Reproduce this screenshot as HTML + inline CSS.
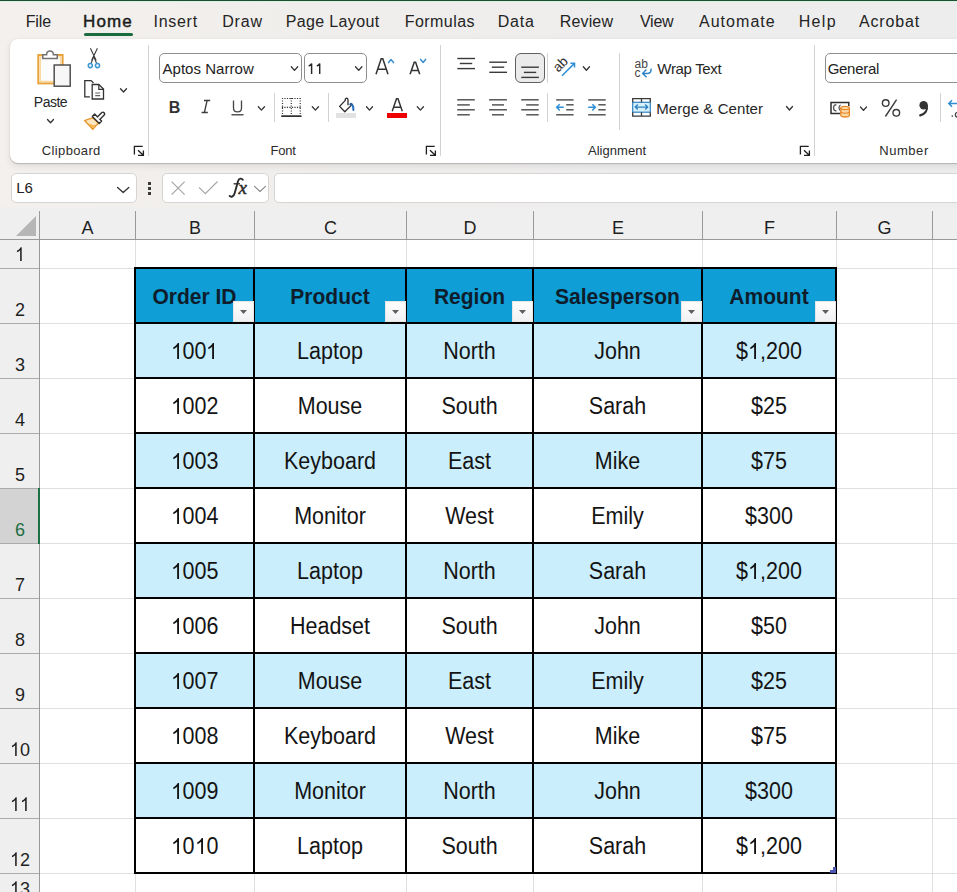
<!DOCTYPE html>
<html><head><meta charset="utf-8">
<style>
*{margin:0;padding:0;box-sizing:border-box}
html,body{width:957px;height:892px;overflow:hidden;background:linear-gradient(90deg,#f3f0ed 0%,#f0eeec 35%,#eeeded 65%,#ededed 100%);font-family:"Liberation Sans",sans-serif}
body{position:relative}
.a{position:absolute}
.t{position:absolute;white-space:nowrap;line-height:1}
#ov{position:absolute;left:0;top:0;overflow:visible}
</style></head><body>
<div class="a" style="left:0px;top:0px;width:957px;height:1px;background:#1b4f30;"></div>
<div class="a" style="left:0px;top:1px;width:957px;height:1px;background:#d6f2e0;"></div>
<div class="t" style="left:25.69px;top:14.00px;font-size:16px;color:#242424;font-weight:normal;letter-spacing:-0.119px;">File</div>
<div class="t" style="left:153.52px;top:14.00px;font-size:16px;color:#242424;font-weight:normal;letter-spacing:0.716px;">Insert</div>
<div class="t" style="left:222.19px;top:14.00px;font-size:16px;color:#242424;font-weight:normal;letter-spacing:0.812px;">Draw</div>
<div class="t" style="left:285.69px;top:14.00px;font-size:16px;color:#242424;font-weight:normal;letter-spacing:0.358px;">Page Layout</div>
<div class="t" style="left:404.69px;top:14.00px;font-size:16px;color:#242424;font-weight:normal;letter-spacing:0.459px;">Formulas</div>
<div class="t" style="left:497.69px;top:14.00px;font-size:16px;color:#242424;font-weight:normal;letter-spacing:0.839px;">Data</div>
<div class="t" style="left:559.69px;top:14.00px;font-size:16px;color:#242424;font-weight:normal;letter-spacing:0.163px;">Review</div>
<div class="t" style="left:639.93px;top:14.00px;font-size:16px;color:#242424;font-weight:normal;letter-spacing:-0.216px;">View</div>
<div class="t" style="left:698.97px;top:14.00px;font-size:16px;color:#242424;font-weight:normal;letter-spacing:1.037px;">Automate</div>
<div class="t" style="left:798.69px;top:14.00px;font-size:16px;color:#242424;font-weight:normal;letter-spacing:1.359px;">Help</div>
<div class="t" style="left:858.97px;top:14.00px;font-size:16px;color:#242424;font-weight:normal;letter-spacing:0.835px;">Acrobat</div>
<div class="t" style="left:83.11px;top:13.00px;font-size:17px;color:#1b1b1b;font-weight:normal;letter-spacing:1.101px;-webkit-text-stroke:0.45px #1b1b1b;">Home</div>
<div class="a" style="left:84px;top:33px;width:49px;height:3px;background:#1c6b3f;border-radius:1.5px"></div>
<div class="a" style="left:10px;top:39px;width:980px;height:124px;background:#fff;border-radius:8px;box-shadow:0 1px 1px rgba(0,0,0,.18),0 3px 7px rgba(0,0,0,.09),0 0 1px rgba(0,0,0,.12)"></div>
<div class="t" style="left:41.84px;top:144.00px;font-size:13px;color:#2b2b2b;font-weight:normal;letter-spacing:0.357px;">Clipboard</div>
<div class="t" style="left:270.43px;top:144.00px;font-size:13px;color:#2b2b2b;font-weight:normal;letter-spacing:-0.184px;">Font</div>
<div class="t" style="left:587.97px;top:144.00px;font-size:13px;color:#2b2b2b;font-weight:normal;letter-spacing:0.039px;">Alignment</div>
<div class="t" style="left:879.33px;top:144.00px;font-size:13px;color:#2b2b2b;font-weight:normal;letter-spacing:0.529px;">Number</div>
<div class="a" style="left:148px;top:45px;width:1px;height:111px;background:#d2d2d2;"></div>
<div class="a" style="left:440px;top:45px;width:1px;height:111px;background:#d2d2d2;"></div>
<div class="a" style="left:814px;top:45px;width:1px;height:111px;background:#d2d2d2;"></div>
<div class="t" style="left:33.85px;top:95.00px;font-size:14px;color:#262626;font-weight:normal;letter-spacing:-0.507px;">Paste</div>
<div class="a" style="left:159px;top:53px;width:143px;height:30px;border:1px solid #8f8f8f;border-radius:5px;background:#fff"></div>
<div class="t" style="left:162.47px;top:61.00px;font-size:15px;color:#222;font-weight:normal;letter-spacing:0.039px;">Aptos Narrow</div>
<div class="a" style="left:304px;top:53px;width:63px;height:30px;border:1px solid #8f8f8f;border-radius:5px;background:#fff"></div>
<div class="t" style="left:168.83px;top:100.00px;font-size:16px;color:#333;font-weight:bold;letter-spacing:0.000px;">B</div>
<div class="a" style="left:274px;top:93px;width:1px;height:29px;background:#d2d2d2;"></div>
<div class="a" style="left:328px;top:93px;width:1px;height:29px;background:#d2d2d2;"></div>
<div class="a" style="left:336px;top:113px;width:20px;height:5px;background:#e2e2e2;"></div>
<div class="a" style="left:387px;top:113px;width:20px;height:5px;background:#ee0000;"></div>
<div class="a" style="left:515px;top:53px;width:30px;height:30px;border:1px solid #606060;border-radius:6px;background:#ebebeb"></div>
<div class="a" style="left:547px;top:53px;width:1px;height:30px;background:#d2d2d2;"></div>
<div class="a" style="left:547px;top:93px;width:1px;height:29px;background:#d2d2d2;"></div>
<div class="a" style="left:619px;top:53px;width:1px;height:77px;background:#d2d2d2;"></div>
<div class="t" style="left:657.33px;top:61.00px;font-size:15px;color:#262626;font-weight:normal;letter-spacing:-0.325px;">Wrap Text</div>
<div class="t" style="left:656.17px;top:101.00px;font-size:15px;color:#262626;font-weight:normal;letter-spacing:0.077px;">Merge &amp; Center</div>
<div class="a" style="left:825px;top:53px;width:200px;height:30px;border:1px solid #8f8f8f;border-radius:5px;background:#fff"></div>
<div class="t" style="left:827.65px;top:61.00px;font-size:15px;color:#222;font-weight:normal;letter-spacing:-0.268px;">General</div>
<div class="a" style="left:940px;top:93px;width:1px;height:29px;background:#d2d2d2;"></div>
<div class="a" style="left:11px;top:173px;width:126px;height:30px;border:1px solid #d4d4d4;border-radius:5px;background:#fff"></div>
<div class="t" style="left:16.27px;top:180.00px;font-size:15px;color:#222;font-weight:normal;letter-spacing:0.000px;">L6</div>
<div class="a" style="left:148px;top:182.2px;width:3px;height:2.6px;background:#3a3a3a;"></div>
<div class="a" style="left:148px;top:187.3px;width:3px;height:2.6px;background:#3a3a3a;"></div>
<div class="a" style="left:148px;top:192.3px;width:3px;height:2.6px;background:#3a3a3a;"></div>
<div class="a" style="left:162px;top:173px;width:107px;height:30px;border:1px solid #d4d4d4;border-radius:5px;background:#fff"></div>
<div class="t" style="left:238.43px;top:178.00px;font-size:19px;color:#2a2a2a;font-weight:normal;letter-spacing:0.000px;font-family:'Liberation Serif',serif;font-style:italic;-webkit-text-stroke:0.5px #2a2a2a;">x</div>
<div class="a" style="left:274px;top:173px;width:720px;height:30px;border:1px solid #d4d4d4;border-radius:5px;background:#fff"></div>
<div class="a" style="left:0px;top:207px;width:957px;height:685px;background:#fff;"></div>
<div class="a" style="left:0px;top:207px;width:957px;height:32px;background:#efefef;"></div>
<div class="a" style="left:0px;top:239px;width:39px;height:653px;background:#efefef;"></div>
<div class="a" style="left:135px;top:240px;width:1px;height:652px;background:#e0e0e0;"></div>
<div class="a" style="left:254px;top:240px;width:1px;height:652px;background:#e0e0e0;"></div>
<div class="a" style="left:406px;top:240px;width:1px;height:652px;background:#e0e0e0;"></div>
<div class="a" style="left:533px;top:240px;width:1px;height:652px;background:#e0e0e0;"></div>
<div class="a" style="left:702px;top:240px;width:1px;height:652px;background:#e0e0e0;"></div>
<div class="a" style="left:836px;top:240px;width:1px;height:652px;background:#e0e0e0;"></div>
<div class="a" style="left:932px;top:240px;width:1px;height:652px;background:#e0e0e0;"></div>
<div class="a" style="left:40px;top:268px;width:917px;height:1px;background:#e0e0e0;"></div>
<div class="a" style="left:40px;top:323px;width:917px;height:1px;background:#e0e0e0;"></div>
<div class="a" style="left:40px;top:378px;width:917px;height:1px;background:#e0e0e0;"></div>
<div class="a" style="left:40px;top:433px;width:917px;height:1px;background:#e0e0e0;"></div>
<div class="a" style="left:40px;top:488px;width:917px;height:1px;background:#e0e0e0;"></div>
<div class="a" style="left:40px;top:543px;width:917px;height:1px;background:#e0e0e0;"></div>
<div class="a" style="left:40px;top:598px;width:917px;height:1px;background:#e0e0e0;"></div>
<div class="a" style="left:40px;top:653px;width:917px;height:1px;background:#e0e0e0;"></div>
<div class="a" style="left:40px;top:708px;width:917px;height:1px;background:#e0e0e0;"></div>
<div class="a" style="left:40px;top:763px;width:917px;height:1px;background:#e0e0e0;"></div>
<div class="a" style="left:40px;top:818px;width:917px;height:1px;background:#e0e0e0;"></div>
<div class="a" style="left:40px;top:873px;width:917px;height:1px;background:#e0e0e0;"></div>
<div class="a" style="left:135px;top:211px;width:1px;height:28px;background:#9a9a9a;"></div>
<div class="a" style="left:254px;top:211px;width:1px;height:28px;background:#9a9a9a;"></div>
<div class="a" style="left:406px;top:211px;width:1px;height:28px;background:#9a9a9a;"></div>
<div class="a" style="left:533px;top:211px;width:1px;height:28px;background:#9a9a9a;"></div>
<div class="a" style="left:702px;top:211px;width:1px;height:28px;background:#9a9a9a;"></div>
<div class="a" style="left:836px;top:211px;width:1px;height:28px;background:#9a9a9a;"></div>
<div class="a" style="left:932px;top:211px;width:1px;height:28px;background:#9a9a9a;"></div>
<div class="a" style="left:0px;top:239px;width:957px;height:1px;background:#9a9a9a;"></div>
<div class="a" style="left:39px;top:211px;width:1px;height:681px;background:#9a9a9a;"></div>
<div class="a" style="left:0px;top:268px;width:39px;height:1px;background:#ababab;"></div>
<div class="a" style="left:0px;top:323px;width:39px;height:1px;background:#ababab;"></div>
<div class="a" style="left:0px;top:378px;width:39px;height:1px;background:#ababab;"></div>
<div class="a" style="left:0px;top:433px;width:39px;height:1px;background:#ababab;"></div>
<div class="a" style="left:0px;top:488px;width:39px;height:1px;background:#ababab;"></div>
<div class="a" style="left:0px;top:543px;width:39px;height:1px;background:#ababab;"></div>
<div class="a" style="left:0px;top:598px;width:39px;height:1px;background:#ababab;"></div>
<div class="a" style="left:0px;top:653px;width:39px;height:1px;background:#ababab;"></div>
<div class="a" style="left:0px;top:708px;width:39px;height:1px;background:#ababab;"></div>
<div class="a" style="left:0px;top:763px;width:39px;height:1px;background:#ababab;"></div>
<div class="a" style="left:0px;top:818px;width:39px;height:1px;background:#ababab;"></div>
<div class="a" style="left:0px;top:873px;width:39px;height:1px;background:#ababab;"></div>
<div class="a" style="left:0px;top:489px;width:38px;height:54px;background:#d3d3d3;"></div>
<div class="a" style="left:38px;top:488px;width:2px;height:56px;background:#1e7145;"></div>
<div class="t" style="left:-62.5px;width:300px;text-align:center;top:219.00px;font-size:18px;color:#1f1f1f;font-weight:normal;transform:scaleY(1.07);transform-origin:50% 15px;">A</div>
<div class="t" style="left:45.0px;width:300px;text-align:center;top:219.00px;font-size:18px;color:#1f1f1f;font-weight:normal;transform:scaleY(1.07);transform-origin:50% 15px;">B</div>
<div class="t" style="left:180.5px;width:300px;text-align:center;top:219.00px;font-size:18px;color:#1f1f1f;font-weight:normal;transform:scaleY(1.07);transform-origin:50% 15px;">C</div>
<div class="t" style="left:320.0px;width:300px;text-align:center;top:219.00px;font-size:18px;color:#1f1f1f;font-weight:normal;transform:scaleY(1.07);transform-origin:50% 15px;">D</div>
<div class="t" style="left:468.0px;width:300px;text-align:center;top:219.00px;font-size:18px;color:#1f1f1f;font-weight:normal;transform:scaleY(1.07);transform-origin:50% 15px;">E</div>
<div class="t" style="left:619.5px;width:300px;text-align:center;top:219.00px;font-size:18px;color:#1f1f1f;font-weight:normal;transform:scaleY(1.07);transform-origin:50% 15px;">F</div>
<div class="t" style="left:734.5px;width:300px;text-align:center;top:219.00px;font-size:18px;color:#1f1f1f;font-weight:normal;transform:scaleY(1.07);transform-origin:50% 15px;">G</div>
<div class="t" style="left:-130px;width:300px;text-align:center;top:246.00px;font-size:18px;color:#1f1f1f;font-weight:normal;transform:scaleY(1.07);transform-origin:50% 15px;"><svg width="10.011" height="12.960" viewBox="0 -1475 1139 1475" style="vertical-align:baseline;display:inline-block"><path transform="scale(1,-1)" d="M586 0 H763 V1466 H648 C600 1370 520 1280 410 1200 C340 1150 270 1115 223 1094 V920 C310 955 420 1010 500 1070 C540 1100 570 1125 586 1140 Z" fill="#1f1f1f"/></svg></div>
<div class="t" style="left:-130px;width:300px;text-align:center;top:301.00px;font-size:18px;color:#1f1f1f;font-weight:normal;transform:scaleY(1.07);transform-origin:50% 15px;">2</div>
<div class="t" style="left:-130px;width:300px;text-align:center;top:356.00px;font-size:18px;color:#1f1f1f;font-weight:normal;transform:scaleY(1.07);transform-origin:50% 15px;">3</div>
<div class="t" style="left:-130px;width:300px;text-align:center;top:411.00px;font-size:18px;color:#1f1f1f;font-weight:normal;transform:scaleY(1.07);transform-origin:50% 15px;">4</div>
<div class="t" style="left:-130px;width:300px;text-align:center;top:466.00px;font-size:18px;color:#1f1f1f;font-weight:normal;transform:scaleY(1.07);transform-origin:50% 15px;">5</div>
<div class="t" style="left:-130px;width:300px;text-align:center;top:521.00px;font-size:18px;color:#1e6e43;font-weight:normal;transform:scaleY(1.07);transform-origin:50% 15px;">6</div>
<div class="t" style="left:-130px;width:300px;text-align:center;top:576.00px;font-size:18px;color:#1f1f1f;font-weight:normal;transform:scaleY(1.07);transform-origin:50% 15px;">7</div>
<div class="t" style="left:-130px;width:300px;text-align:center;top:631.00px;font-size:18px;color:#1f1f1f;font-weight:normal;transform:scaleY(1.07);transform-origin:50% 15px;">8</div>
<div class="t" style="left:-130px;width:300px;text-align:center;top:686.00px;font-size:18px;color:#1f1f1f;font-weight:normal;transform:scaleY(1.07);transform-origin:50% 15px;">9</div>
<div class="t" style="left:-130px;width:300px;text-align:center;top:741.00px;font-size:18px;color:#1f1f1f;font-weight:normal;transform:scaleY(1.07);transform-origin:50% 15px;"><svg width="10.011" height="12.960" viewBox="0 -1475 1139 1475" style="vertical-align:baseline;display:inline-block"><path transform="scale(1,-1)" d="M586 0 H763 V1466 H648 C600 1370 520 1280 410 1200 C340 1150 270 1115 223 1094 V920 C310 955 420 1010 500 1070 C540 1100 570 1125 586 1140 Z" fill="#1f1f1f"/></svg>0</div>
<div class="t" style="left:-130px;width:300px;text-align:center;top:796.00px;font-size:18px;color:#1f1f1f;font-weight:normal;transform:scaleY(1.07);transform-origin:50% 15px;"><svg width="10.011" height="12.960" viewBox="0 -1475 1139 1475" style="vertical-align:baseline;display:inline-block"><path transform="scale(1,-1)" d="M586 0 H763 V1466 H648 C600 1370 520 1280 410 1200 C340 1150 270 1115 223 1094 V920 C310 955 420 1010 500 1070 C540 1100 570 1125 586 1140 Z" fill="#1f1f1f"/></svg><svg width="10.011" height="12.960" viewBox="0 -1475 1139 1475" style="vertical-align:baseline;display:inline-block"><path transform="scale(1,-1)" d="M586 0 H763 V1466 H648 C600 1370 520 1280 410 1200 C340 1150 270 1115 223 1094 V920 C310 955 420 1010 500 1070 C540 1100 570 1125 586 1140 Z" fill="#1f1f1f"/></svg></div>
<div class="t" style="left:-130px;width:300px;text-align:center;top:851.00px;font-size:18px;color:#1f1f1f;font-weight:normal;transform:scaleY(1.07);transform-origin:50% 15px;"><svg width="10.011" height="12.960" viewBox="0 -1475 1139 1475" style="vertical-align:baseline;display:inline-block"><path transform="scale(1,-1)" d="M586 0 H763 V1466 H648 C600 1370 520 1280 410 1200 C340 1150 270 1115 223 1094 V920 C310 955 420 1010 500 1070 C540 1100 570 1125 586 1140 Z" fill="#1f1f1f"/></svg>2</div>
<div class="t" style="left:-130px;width:300px;text-align:center;top:880.00px;font-size:18px;color:#1f1f1f;font-weight:normal;transform:scaleY(1.07);transform-origin:50% 15px;"><svg width="10.011" height="12.960" viewBox="0 -1475 1139 1475" style="vertical-align:baseline;display:inline-block"><path transform="scale(1,-1)" d="M586 0 H763 V1466 H648 C600 1370 520 1280 410 1200 C340 1150 270 1115 223 1094 V920 C310 955 420 1010 500 1070 C540 1100 570 1125 586 1140 Z" fill="#1f1f1f"/></svg>3</div>
<div class="a" style="left:136px;top:269px;width:700px;height:54px;background:#0f9ed5;"></div>
<div class="a" style="left:136px;top:324px;width:700px;height:54px;background:#caeefb;"></div>
<div class="a" style="left:136px;top:434px;width:700px;height:54px;background:#caeefb;"></div>
<div class="a" style="left:136px;top:544px;width:700px;height:54px;background:#caeefb;"></div>
<div class="a" style="left:136px;top:654px;width:700px;height:54px;background:#caeefb;"></div>
<div class="a" style="left:136px;top:764px;width:700px;height:54px;background:#caeefb;"></div>
<div class="a" style="left:134px;top:267px;width:2px;height:607px;background:#000;"></div>
<div class="a" style="left:253px;top:267px;width:2px;height:607px;background:#000;"></div>
<div class="a" style="left:405px;top:267px;width:2px;height:607px;background:#000;"></div>
<div class="a" style="left:532px;top:267px;width:2px;height:607px;background:#000;"></div>
<div class="a" style="left:701px;top:267px;width:2px;height:607px;background:#000;"></div>
<div class="a" style="left:835px;top:267px;width:2px;height:607px;background:#000;"></div>
<div class="a" style="left:134px;top:267px;width:703px;height:2px;background:#000;"></div>
<div class="a" style="left:134px;top:322px;width:703px;height:2px;background:#000;"></div>
<div class="a" style="left:134px;top:377px;width:703px;height:2px;background:#000;"></div>
<div class="a" style="left:134px;top:432px;width:703px;height:2px;background:#000;"></div>
<div class="a" style="left:134px;top:487px;width:703px;height:2px;background:#000;"></div>
<div class="a" style="left:134px;top:542px;width:703px;height:2px;background:#000;"></div>
<div class="a" style="left:134px;top:597px;width:703px;height:2px;background:#000;"></div>
<div class="a" style="left:134px;top:652px;width:703px;height:2px;background:#000;"></div>
<div class="a" style="left:134px;top:707px;width:703px;height:2px;background:#000;"></div>
<div class="a" style="left:134px;top:762px;width:703px;height:2px;background:#000;"></div>
<div class="a" style="left:134px;top:817px;width:703px;height:2px;background:#000;"></div>
<div class="a" style="left:134px;top:872px;width:703px;height:2px;background:#000;"></div>
<div class="t" style="left:44.5px;width:300px;text-align:center;top:286.00px;font-size:21px;color:#0e1c2b;font-weight:bold;transform:scaleY(1.09);transform-origin:50% 18px;">Order ID</div>
<div class="t" style="left:180.0px;width:300px;text-align:center;top:286.00px;font-size:21px;color:#0e1c2b;font-weight:bold;transform:scaleY(1.09);transform-origin:50% 18px;">Product</div>
<div class="t" style="left:319.5px;width:300px;text-align:center;top:286.00px;font-size:21px;color:#0e1c2b;font-weight:bold;transform:scaleY(1.09);transform-origin:50% 18px;">Region</div>
<div class="t" style="left:467.5px;width:300px;text-align:center;top:286.00px;font-size:21px;color:#0e1c2b;font-weight:bold;transform:scaleY(1.09);transform-origin:50% 18px;">Salesperson</div>
<div class="t" style="left:619.0px;width:300px;text-align:center;top:286.00px;font-size:21px;color:#0e1c2b;font-weight:bold;transform:scaleY(1.09);transform-origin:50% 18px;">Amount</div>
<div class="t" style="left:44.5px;width:300px;text-align:center;top:342.00px;font-size:21.5px;color:#141414;font-weight:normal;transform:scaleY(1.07);transform-origin:50% 17px;"><svg width="11.957" height="15.480" viewBox="0 -1475 1139 1475" style="vertical-align:baseline;display:inline-block"><path transform="scale(1,-1)" d="M586 0 H763 V1466 H648 C600 1370 520 1280 410 1200 C340 1150 270 1115 223 1094 V920 C310 955 420 1010 500 1070 C540 1100 570 1125 586 1140 Z" fill="#141414"/></svg>00<svg width="11.957" height="15.480" viewBox="0 -1475 1139 1475" style="vertical-align:baseline;display:inline-block"><path transform="scale(1,-1)" d="M586 0 H763 V1466 H648 C600 1370 520 1280 410 1200 C340 1150 270 1115 223 1094 V920 C310 955 420 1010 500 1070 C540 1100 570 1125 586 1140 Z" fill="#141414"/></svg></div>
<div class="t" style="left:180.0px;width:300px;text-align:center;top:342.00px;font-size:21.5px;color:#141414;font-weight:normal;transform:scaleY(1.07);transform-origin:50% 17px;">Laptop</div>
<div class="t" style="left:319.5px;width:300px;text-align:center;top:342.00px;font-size:21.5px;color:#141414;font-weight:normal;transform:scaleY(1.07);transform-origin:50% 17px;">North</div>
<div class="t" style="left:467.5px;width:300px;text-align:center;top:342.00px;font-size:21.5px;color:#141414;font-weight:normal;transform:scaleY(1.07);transform-origin:50% 17px;">John</div>
<div class="t" style="left:619.0px;width:300px;text-align:center;top:342.00px;font-size:21.5px;color:#141414;font-weight:normal;transform:scaleY(1.07);transform-origin:50% 17px;">$<svg width="11.957" height="15.480" viewBox="0 -1475 1139 1475" style="vertical-align:baseline;display:inline-block"><path transform="scale(1,-1)" d="M586 0 H763 V1466 H648 C600 1370 520 1280 410 1200 C340 1150 270 1115 223 1094 V920 C310 955 420 1010 500 1070 C540 1100 570 1125 586 1140 Z" fill="#141414"/></svg>,200</div>
<div class="t" style="left:44.5px;width:300px;text-align:center;top:397.00px;font-size:21.5px;color:#141414;font-weight:normal;transform:scaleY(1.07);transform-origin:50% 17px;"><svg width="11.957" height="15.480" viewBox="0 -1475 1139 1475" style="vertical-align:baseline;display:inline-block"><path transform="scale(1,-1)" d="M586 0 H763 V1466 H648 C600 1370 520 1280 410 1200 C340 1150 270 1115 223 1094 V920 C310 955 420 1010 500 1070 C540 1100 570 1125 586 1140 Z" fill="#141414"/></svg>002</div>
<div class="t" style="left:180.0px;width:300px;text-align:center;top:397.00px;font-size:21.5px;color:#141414;font-weight:normal;transform:scaleY(1.07);transform-origin:50% 17px;">Mouse</div>
<div class="t" style="left:319.5px;width:300px;text-align:center;top:397.00px;font-size:21.5px;color:#141414;font-weight:normal;transform:scaleY(1.07);transform-origin:50% 17px;">South</div>
<div class="t" style="left:467.5px;width:300px;text-align:center;top:397.00px;font-size:21.5px;color:#141414;font-weight:normal;transform:scaleY(1.07);transform-origin:50% 17px;">Sarah</div>
<div class="t" style="left:619.0px;width:300px;text-align:center;top:397.00px;font-size:21.5px;color:#141414;font-weight:normal;transform:scaleY(1.07);transform-origin:50% 17px;">$25</div>
<div class="t" style="left:44.5px;width:300px;text-align:center;top:452.00px;font-size:21.5px;color:#141414;font-weight:normal;transform:scaleY(1.07);transform-origin:50% 17px;"><svg width="11.957" height="15.480" viewBox="0 -1475 1139 1475" style="vertical-align:baseline;display:inline-block"><path transform="scale(1,-1)" d="M586 0 H763 V1466 H648 C600 1370 520 1280 410 1200 C340 1150 270 1115 223 1094 V920 C310 955 420 1010 500 1070 C540 1100 570 1125 586 1140 Z" fill="#141414"/></svg>003</div>
<div class="t" style="left:180.0px;width:300px;text-align:center;top:452.00px;font-size:21.5px;color:#141414;font-weight:normal;transform:scaleY(1.07);transform-origin:50% 17px;">Keyboard</div>
<div class="t" style="left:319.5px;width:300px;text-align:center;top:452.00px;font-size:21.5px;color:#141414;font-weight:normal;transform:scaleY(1.07);transform-origin:50% 17px;">East</div>
<div class="t" style="left:467.5px;width:300px;text-align:center;top:452.00px;font-size:21.5px;color:#141414;font-weight:normal;transform:scaleY(1.07);transform-origin:50% 17px;">Mike</div>
<div class="t" style="left:619.0px;width:300px;text-align:center;top:452.00px;font-size:21.5px;color:#141414;font-weight:normal;transform:scaleY(1.07);transform-origin:50% 17px;">$75</div>
<div class="t" style="left:44.5px;width:300px;text-align:center;top:507.00px;font-size:21.5px;color:#141414;font-weight:normal;transform:scaleY(1.07);transform-origin:50% 17px;"><svg width="11.957" height="15.480" viewBox="0 -1475 1139 1475" style="vertical-align:baseline;display:inline-block"><path transform="scale(1,-1)" d="M586 0 H763 V1466 H648 C600 1370 520 1280 410 1200 C340 1150 270 1115 223 1094 V920 C310 955 420 1010 500 1070 C540 1100 570 1125 586 1140 Z" fill="#141414"/></svg>004</div>
<div class="t" style="left:180.0px;width:300px;text-align:center;top:507.00px;font-size:21.5px;color:#141414;font-weight:normal;transform:scaleY(1.07);transform-origin:50% 17px;">Monitor</div>
<div class="t" style="left:319.5px;width:300px;text-align:center;top:507.00px;font-size:21.5px;color:#141414;font-weight:normal;transform:scaleY(1.07);transform-origin:50% 17px;">West</div>
<div class="t" style="left:467.5px;width:300px;text-align:center;top:507.00px;font-size:21.5px;color:#141414;font-weight:normal;transform:scaleY(1.07);transform-origin:50% 17px;">Emily</div>
<div class="t" style="left:619.0px;width:300px;text-align:center;top:507.00px;font-size:21.5px;color:#141414;font-weight:normal;transform:scaleY(1.07);transform-origin:50% 17px;">$300</div>
<div class="t" style="left:44.5px;width:300px;text-align:center;top:562.00px;font-size:21.5px;color:#141414;font-weight:normal;transform:scaleY(1.07);transform-origin:50% 17px;"><svg width="11.957" height="15.480" viewBox="0 -1475 1139 1475" style="vertical-align:baseline;display:inline-block"><path transform="scale(1,-1)" d="M586 0 H763 V1466 H648 C600 1370 520 1280 410 1200 C340 1150 270 1115 223 1094 V920 C310 955 420 1010 500 1070 C540 1100 570 1125 586 1140 Z" fill="#141414"/></svg>005</div>
<div class="t" style="left:180.0px;width:300px;text-align:center;top:562.00px;font-size:21.5px;color:#141414;font-weight:normal;transform:scaleY(1.07);transform-origin:50% 17px;">Laptop</div>
<div class="t" style="left:319.5px;width:300px;text-align:center;top:562.00px;font-size:21.5px;color:#141414;font-weight:normal;transform:scaleY(1.07);transform-origin:50% 17px;">North</div>
<div class="t" style="left:467.5px;width:300px;text-align:center;top:562.00px;font-size:21.5px;color:#141414;font-weight:normal;transform:scaleY(1.07);transform-origin:50% 17px;">Sarah</div>
<div class="t" style="left:619.0px;width:300px;text-align:center;top:562.00px;font-size:21.5px;color:#141414;font-weight:normal;transform:scaleY(1.07);transform-origin:50% 17px;">$<svg width="11.957" height="15.480" viewBox="0 -1475 1139 1475" style="vertical-align:baseline;display:inline-block"><path transform="scale(1,-1)" d="M586 0 H763 V1466 H648 C600 1370 520 1280 410 1200 C340 1150 270 1115 223 1094 V920 C310 955 420 1010 500 1070 C540 1100 570 1125 586 1140 Z" fill="#141414"/></svg>,200</div>
<div class="t" style="left:44.5px;width:300px;text-align:center;top:617.00px;font-size:21.5px;color:#141414;font-weight:normal;transform:scaleY(1.07);transform-origin:50% 17px;"><svg width="11.957" height="15.480" viewBox="0 -1475 1139 1475" style="vertical-align:baseline;display:inline-block"><path transform="scale(1,-1)" d="M586 0 H763 V1466 H648 C600 1370 520 1280 410 1200 C340 1150 270 1115 223 1094 V920 C310 955 420 1010 500 1070 C540 1100 570 1125 586 1140 Z" fill="#141414"/></svg>006</div>
<div class="t" style="left:180.0px;width:300px;text-align:center;top:617.00px;font-size:21.5px;color:#141414;font-weight:normal;transform:scaleY(1.07);transform-origin:50% 17px;">Headset</div>
<div class="t" style="left:319.5px;width:300px;text-align:center;top:617.00px;font-size:21.5px;color:#141414;font-weight:normal;transform:scaleY(1.07);transform-origin:50% 17px;">South</div>
<div class="t" style="left:467.5px;width:300px;text-align:center;top:617.00px;font-size:21.5px;color:#141414;font-weight:normal;transform:scaleY(1.07);transform-origin:50% 17px;">John</div>
<div class="t" style="left:619.0px;width:300px;text-align:center;top:617.00px;font-size:21.5px;color:#141414;font-weight:normal;transform:scaleY(1.07);transform-origin:50% 17px;">$50</div>
<div class="t" style="left:44.5px;width:300px;text-align:center;top:672.00px;font-size:21.5px;color:#141414;font-weight:normal;transform:scaleY(1.07);transform-origin:50% 17px;"><svg width="11.957" height="15.480" viewBox="0 -1475 1139 1475" style="vertical-align:baseline;display:inline-block"><path transform="scale(1,-1)" d="M586 0 H763 V1466 H648 C600 1370 520 1280 410 1200 C340 1150 270 1115 223 1094 V920 C310 955 420 1010 500 1070 C540 1100 570 1125 586 1140 Z" fill="#141414"/></svg>007</div>
<div class="t" style="left:180.0px;width:300px;text-align:center;top:672.00px;font-size:21.5px;color:#141414;font-weight:normal;transform:scaleY(1.07);transform-origin:50% 17px;">Mouse</div>
<div class="t" style="left:319.5px;width:300px;text-align:center;top:672.00px;font-size:21.5px;color:#141414;font-weight:normal;transform:scaleY(1.07);transform-origin:50% 17px;">East</div>
<div class="t" style="left:467.5px;width:300px;text-align:center;top:672.00px;font-size:21.5px;color:#141414;font-weight:normal;transform:scaleY(1.07);transform-origin:50% 17px;">Emily</div>
<div class="t" style="left:619.0px;width:300px;text-align:center;top:672.00px;font-size:21.5px;color:#141414;font-weight:normal;transform:scaleY(1.07);transform-origin:50% 17px;">$25</div>
<div class="t" style="left:44.5px;width:300px;text-align:center;top:727.00px;font-size:21.5px;color:#141414;font-weight:normal;transform:scaleY(1.07);transform-origin:50% 17px;"><svg width="11.957" height="15.480" viewBox="0 -1475 1139 1475" style="vertical-align:baseline;display:inline-block"><path transform="scale(1,-1)" d="M586 0 H763 V1466 H648 C600 1370 520 1280 410 1200 C340 1150 270 1115 223 1094 V920 C310 955 420 1010 500 1070 C540 1100 570 1125 586 1140 Z" fill="#141414"/></svg>008</div>
<div class="t" style="left:180.0px;width:300px;text-align:center;top:727.00px;font-size:21.5px;color:#141414;font-weight:normal;transform:scaleY(1.07);transform-origin:50% 17px;">Keyboard</div>
<div class="t" style="left:319.5px;width:300px;text-align:center;top:727.00px;font-size:21.5px;color:#141414;font-weight:normal;transform:scaleY(1.07);transform-origin:50% 17px;">West</div>
<div class="t" style="left:467.5px;width:300px;text-align:center;top:727.00px;font-size:21.5px;color:#141414;font-weight:normal;transform:scaleY(1.07);transform-origin:50% 17px;">Mike</div>
<div class="t" style="left:619.0px;width:300px;text-align:center;top:727.00px;font-size:21.5px;color:#141414;font-weight:normal;transform:scaleY(1.07);transform-origin:50% 17px;">$75</div>
<div class="t" style="left:44.5px;width:300px;text-align:center;top:782.00px;font-size:21.5px;color:#141414;font-weight:normal;transform:scaleY(1.07);transform-origin:50% 17px;"><svg width="11.957" height="15.480" viewBox="0 -1475 1139 1475" style="vertical-align:baseline;display:inline-block"><path transform="scale(1,-1)" d="M586 0 H763 V1466 H648 C600 1370 520 1280 410 1200 C340 1150 270 1115 223 1094 V920 C310 955 420 1010 500 1070 C540 1100 570 1125 586 1140 Z" fill="#141414"/></svg>009</div>
<div class="t" style="left:180.0px;width:300px;text-align:center;top:782.00px;font-size:21.5px;color:#141414;font-weight:normal;transform:scaleY(1.07);transform-origin:50% 17px;">Monitor</div>
<div class="t" style="left:319.5px;width:300px;text-align:center;top:782.00px;font-size:21.5px;color:#141414;font-weight:normal;transform:scaleY(1.07);transform-origin:50% 17px;">North</div>
<div class="t" style="left:467.5px;width:300px;text-align:center;top:782.00px;font-size:21.5px;color:#141414;font-weight:normal;transform:scaleY(1.07);transform-origin:50% 17px;">John</div>
<div class="t" style="left:619.0px;width:300px;text-align:center;top:782.00px;font-size:21.5px;color:#141414;font-weight:normal;transform:scaleY(1.07);transform-origin:50% 17px;">$300</div>
<div class="t" style="left:44.5px;width:300px;text-align:center;top:837.00px;font-size:21.5px;color:#141414;font-weight:normal;transform:scaleY(1.07);transform-origin:50% 17px;"><svg width="11.957" height="15.480" viewBox="0 -1475 1139 1475" style="vertical-align:baseline;display:inline-block"><path transform="scale(1,-1)" d="M586 0 H763 V1466 H648 C600 1370 520 1280 410 1200 C340 1150 270 1115 223 1094 V920 C310 955 420 1010 500 1070 C540 1100 570 1125 586 1140 Z" fill="#141414"/></svg>0<svg width="11.957" height="15.480" viewBox="0 -1475 1139 1475" style="vertical-align:baseline;display:inline-block"><path transform="scale(1,-1)" d="M586 0 H763 V1466 H648 C600 1370 520 1280 410 1200 C340 1150 270 1115 223 1094 V920 C310 955 420 1010 500 1070 C540 1100 570 1125 586 1140 Z" fill="#141414"/></svg>0</div>
<div class="t" style="left:180.0px;width:300px;text-align:center;top:837.00px;font-size:21.5px;color:#141414;font-weight:normal;transform:scaleY(1.07);transform-origin:50% 17px;">Laptop</div>
<div class="t" style="left:319.5px;width:300px;text-align:center;top:837.00px;font-size:21.5px;color:#141414;font-weight:normal;transform:scaleY(1.07);transform-origin:50% 17px;">South</div>
<div class="t" style="left:467.5px;width:300px;text-align:center;top:837.00px;font-size:21.5px;color:#141414;font-weight:normal;transform:scaleY(1.07);transform-origin:50% 17px;">Sarah</div>
<div class="t" style="left:619.0px;width:300px;text-align:center;top:837.00px;font-size:21.5px;color:#141414;font-weight:normal;transform:scaleY(1.07);transform-origin:50% 17px;">$<svg width="11.957" height="15.480" viewBox="0 -1475 1139 1475" style="vertical-align:baseline;display:inline-block"><path transform="scale(1,-1)" d="M586 0 H763 V1466 H648 C600 1370 520 1280 410 1200 C340 1150 270 1115 223 1094 V920 C310 955 420 1010 500 1070 C540 1100 570 1125 586 1140 Z" fill="#141414"/></svg>,200</div>
<div class="a" style="left:233px;top:301px;width:21px;height:21px;background:linear-gradient(#fefefe,#f1f1f3);border:1px solid #e6e6e6"></div>
<div class="a" style="left:385px;top:301px;width:21px;height:21px;background:linear-gradient(#fefefe,#f1f1f3);border:1px solid #e6e6e6"></div>
<div class="a" style="left:512px;top:301px;width:21px;height:21px;background:linear-gradient(#fefefe,#f1f1f3);border:1px solid #e6e6e6"></div>
<div class="a" style="left:681px;top:301px;width:21px;height:21px;background:linear-gradient(#fefefe,#f1f1f3);border:1px solid #e6e6e6"></div>
<div class="a" style="left:815px;top:301px;width:21px;height:21px;background:linear-gradient(#fefefe,#f1f1f3);border:1px solid #e6e6e6"></div>
<div class="a" style="left:833px;top:867px;width:3px;height:3px;background:#4c58b4;"></div>
<div class="a" style="left:830px;top:870px;width:6px;height:3px;background:#4c58b4;"></div>
<svg id="ov" width="957" height="892" viewBox="0 0 957 892"><path d="M134.4 154.6 V146.4 H142.7 M138 150.2 L143.3 155.2 M143.4 150.4 V155.4 H138" fill="none" stroke="#1e1e1e" stroke-width="1.3"/><path d="M426.4 154.6 V146.4 H434.7 M430 150.2 L435.3 155.2 M435.4 150.4 V155.4 H430" fill="none" stroke="#1e1e1e" stroke-width="1.3"/><path d="M800.4 154.6 V146.4 H808.7 M804 150.2 L809.3 155.2 M809.4 150.4 V155.4 H804" fill="none" stroke="#1e1e1e" stroke-width="1.3"/><rect x="38.3" y="55" width="24.3" height="28.4" fill="#fdfdfd" stroke="#e8a33b" stroke-width="2"/><rect x="40.3" y="57" width="20.3" height="24.4" fill="none" stroke="#fcd9a1" stroke-width="1.4"/><path d="M42.75 58.6 V54.75 H46.6 C46.6 49.6 53.4 49.6 53.4 54.75 H57.25 V58.6 Z" fill="#fff" stroke="#737373" stroke-width="1.5"/><rect x="54.2" y="65" width="16" height="21.2" fill="#f7f7f7" stroke="#505050" stroke-width="1.5"/><path d="M47.5 119.5 L50.5 122.8 L53.5 119.5" fill="none" stroke="#333" stroke-width="1.3" stroke-linecap="round" stroke-linejoin="round"/><path d="M90.4 48.3 L96.2 60.5 M97.4 48.3 L91.6 60.5" stroke="#3a3a3a" stroke-width="1.1" fill="none"/><path d="M93.8 56.5 L90.9 63.6 M93.8 56.5 L96.7 63.6" stroke="#3a3a3a" stroke-width="1.1" fill="none"/><circle cx="90.3" cy="65.6" r="2.1" fill="#eaf4fb" stroke="#3a95d3" stroke-width="1.4"/><circle cx="97.5" cy="65.6" r="2.1" fill="#eaf4fb" stroke="#3a95d3" stroke-width="1.4"/><path d="M89.9 96.8 H84.8 V80.6 H91.1 L93.5 83" fill="none" stroke="#333" stroke-width="1.3"/><path d="M92.2 84.5 H98.8 L103.5 89 V99 H92.2 Z" fill="#fff" stroke="#333" stroke-width="1.3"/><path d="M98.8 84.5 V89.3 H103.5" fill="none" stroke="#333" stroke-width="1.2"/><path d="M95.2 93 H100.2 M95.2 95.6 H100.2" stroke="#666" stroke-width="1.1"/><path d="M120.5 88.8 L123.5 92 L126.5 88.8" fill="none" stroke="#333" stroke-width="1.3" stroke-linecap="round" stroke-linejoin="round"/><path d="M92.4 117.8 C89.6 118.8 87 119.8 84.6 120.6 L92.8 129.3 C94.3 127.3 96.4 124.8 98.8 123.2 Z" fill="#fde7c2" stroke="#e8952e" stroke-width="1.4" stroke-linejoin="round"/><path d="M87.6 123.2 L95.2 125.6 L92.9 128.2 Z" fill="#f7b54e"/><path d="M92.3 116.4 L94.6 114.1 L101.6 121.1 L99.3 123.4 Z" fill="#fff" stroke="#303030" stroke-width="1.4" stroke-linejoin="round"/><path d="M97.1 117.3 L101.6 112.8 Q102.9 111.5 104.1 112.7 Q105.3 113.9 104 115.2 L99.5 119.7" fill="#fff" stroke="#303030" stroke-width="1.4" stroke-linejoin="round"/><path d="M291.3 66.8 L294.5 70.4 L297.7 66.8" fill="none" stroke="#333" stroke-width="1.3" stroke-linecap="round" stroke-linejoin="round"/><path d="M308.7 66 Q310.7 65.2 311.6 63.5 V73.9 M316.8 66 Q318.8 65.2 319.7 63.5 V73.9" fill="none" stroke="#262626" stroke-width="1.45"/><path d="M355.5 66.8 L358.7 70.4 L361.9 66.8" fill="none" stroke="#333" stroke-width="1.3" stroke-linecap="round" stroke-linejoin="round"/><path d="M376 74.3 L381.2 58.7 H382.8 L388 74.3 M377.9 69.2 H386.1" fill="none" stroke="#333" stroke-width="1.5"/><path d="M388.5 62.6 L391.0 59.6 L393.5 62.6" fill="none" stroke="#3a8fd0" stroke-width="1.5" stroke-linecap="round" stroke-linejoin="round"/><path d="M410.1 74.3 L414.2 62.2 H415.6 L419.7 74.3 M411.7 70.6 H418.1" fill="none" stroke="#333" stroke-width="1.5"/><path d="M420.6 59.4 L423.1 62.4 L425.6 59.4" fill="none" stroke="#3a8fd0" stroke-width="1.5" stroke-linecap="round" stroke-linejoin="round"/><path d="M204 100.5 H210.2 M207.1 100.5 L204.4 112.5 M201.6 112.5 H207.8" fill="none" stroke="#3a3a3a" stroke-width="1.3"/><path d="M233.5 100.4 V108 C233.5 113.2 241.5 113.2 241.5 108 V100.4" fill="none" stroke="#444" stroke-width="1.3"/><path d="M232 114.8 H243" stroke="#555" stroke-width="1.5" stroke-linecap="round"/><path d="M258.3 106.8 L261.4 110.1 L264.5 106.8" fill="none" stroke="#333" stroke-width="1.3" stroke-linecap="round" stroke-linejoin="round"/><path d="M281.90 98.5 h1.2 M281.90 107.3 h1.2 M284.40 98.5 h1.2 M284.40 107.3 h1.2 M286.90 98.5 h1.2 M286.90 107.3 h1.2 M289.40 98.5 h1.2 M289.40 107.3 h1.2 M291.90 98.5 h1.2 M291.90 107.3 h1.2 M294.40 98.5 h1.2 M294.40 107.3 h1.2 M296.90 98.5 h1.2 M296.90 107.3 h1.2 M299.40 98.5 h1.2 M299.40 107.3 h1.2 M281.90 98.5 h1.2 M290.70 98.5 h1.2 M299.60 98.5 h1.2 M281.90 101.0 h1.2 M290.70 101.0 h1.2 M299.60 101.0 h1.2 M281.90 103.5 h1.2 M290.70 103.5 h1.2 M299.60 103.5 h1.2 M281.90 106.0 h1.2 M290.70 106.0 h1.2 M299.60 106.0 h1.2 M281.90 108.5 h1.2 M290.70 108.5 h1.2 M299.60 108.5 h1.2 M281.90 111.0 h1.2 M290.70 111.0 h1.2 M299.60 111.0 h1.2 M281.90 113.5 h1.2 M290.70 113.5 h1.2 M299.60 113.5 h1.2" stroke="#333" stroke-width="1.2"/><path d="M282 116.2 H300.8" stroke="#333" stroke-width="1.8" stroke-linecap="round"/><path d="M312.3 106.8 L315.4 110.1 L318.5 106.8" fill="none" stroke="#333" stroke-width="1.3" stroke-linecap="round" stroke-linejoin="round"/><path d="M348 105.3 V100.2 Q348 98.1 346.5 98.1 Q345.3 98.1 345.1 100.6 L339.6 106.4 L344.8 111.7 L351.2 105.4" fill="#fff" stroke="#2a2a2a" stroke-width="1.3" stroke-linejoin="round"/><path d="M350.8 104 Q353.5 104.6 353.4 109.9" fill="none" stroke="#2b73c0" stroke-width="2.1" stroke-linecap="round"/><circle cx="351" cy="104.3" r="1.5" fill="#2b5f96"/><path d="M366.5 106.8 L369.5 110.1 L372.5 106.8" fill="none" stroke="#333" stroke-width="1.3" stroke-linecap="round" stroke-linejoin="round"/><path d="M392.2 111.3 L396.5 98.7 H398 L402.3 111.3 M393.8 107.2 H400.7" fill="none" stroke="#333" stroke-width="1.45"/><path d="M417.3 106.8 L420.4 110.1 L423.5 106.8" fill="none" stroke="#333" stroke-width="1.3" stroke-linecap="round" stroke-linejoin="round"/><path d="M457.3 58.5 H475" stroke="#3a3a3a" stroke-width="1.4" stroke-linecap="butt"/><path d="M459.8 63.5 H472.2" stroke="#3a3a3a" stroke-width="1.4" stroke-linecap="butt"/><path d="M457.3 68.6 H475" stroke="#3a3a3a" stroke-width="1.4" stroke-linecap="butt"/><path d="M489.3 62.2 H507" stroke="#3a3a3a" stroke-width="1.4" stroke-linecap="butt"/><path d="M491.8 67.2 H504.2" stroke="#3a3a3a" stroke-width="1.4" stroke-linecap="butt"/><path d="M489.3 72.3 H507" stroke="#3a3a3a" stroke-width="1.4" stroke-linecap="butt"/><path d="M521.2 67.2 H538.9" stroke="#3a3a3a" stroke-width="1.4" stroke-linecap="butt"/><path d="M523.9 72.4 H536.2" stroke="#3a3a3a" stroke-width="1.4" stroke-linecap="butt"/><path d="M521.2 77.4 H538.9" stroke="#3a3a3a" stroke-width="1.4" stroke-linecap="butt"/><text transform="translate(558.2 72.8) rotate(-45)" font-family="Liberation Sans" font-size="13.5" fill="#2e2e2e">ab</text><path d="M562 75.8 L574.4 63.4 M570.4 63.3 H574.5 V67.4" fill="none" stroke="#2f8fd6" stroke-width="1.5"/><path d="M583.3 66.8 L586.4 70.2 L589.5 66.8" fill="none" stroke="#333" stroke-width="1.3" stroke-linecap="round" stroke-linejoin="round"/><path d="M457.2 99.8 H474.8" stroke="#4a4a4a" stroke-width="1.4" stroke-linecap="butt"/><path d="M489.1 99.8 H506.9" stroke="#4a4a4a" stroke-width="1.4" stroke-linecap="butt"/><path d="M521.2 99.8 H538.7" stroke="#4a4a4a" stroke-width="1.4" stroke-linecap="butt"/><path d="M457.2 104.9 H469.8" stroke="#4a4a4a" stroke-width="1.4" stroke-linecap="butt"/><path d="M492 104.9 H504" stroke="#4a4a4a" stroke-width="1.4" stroke-linecap="butt"/><path d="M526.2 104.9 H538.7" stroke="#4a4a4a" stroke-width="1.4" stroke-linecap="butt"/><path d="M457.2 109.8 H474.8" stroke="#4a4a4a" stroke-width="1.4" stroke-linecap="butt"/><path d="M489.1 109.8 H506.9" stroke="#4a4a4a" stroke-width="1.4" stroke-linecap="butt"/><path d="M521.2 109.8 H538.7" stroke="#4a4a4a" stroke-width="1.4" stroke-linecap="butt"/><path d="M457.2 114.8 H469.8" stroke="#4a4a4a" stroke-width="1.4" stroke-linecap="butt"/><path d="M492 114.8 H504" stroke="#4a4a4a" stroke-width="1.4" stroke-linecap="butt"/><path d="M526.2 114.8 H538.7" stroke="#4a4a4a" stroke-width="1.4" stroke-linecap="butt"/><path d="M556.2 99.9 H573.6" stroke="#4a4a4a" stroke-width="1.4" stroke-linecap="butt"/><path d="M566.2 104.8 H573.6" stroke="#4a4a4a" stroke-width="1.4" stroke-linecap="butt"/><path d="M566.2 109.8 H573.6" stroke="#4a4a4a" stroke-width="1.4" stroke-linecap="butt"/><path d="M556.2 114.8 H573.6" stroke="#4a4a4a" stroke-width="1.4" stroke-linecap="butt"/><path d="M563.8 107.3 H556.8 M559.7 104.3 L556.7 107.3 L559.7 110.4" fill="none" stroke="#2f8fd6" stroke-width="1.5"/><path d="M588.2 99.9 H605.7" stroke="#4a4a4a" stroke-width="1.4" stroke-linecap="butt"/><path d="M598.3 104.8 H605.7" stroke="#4a4a4a" stroke-width="1.4" stroke-linecap="butt"/><path d="M598.3 109.8 H605.7" stroke="#4a4a4a" stroke-width="1.4" stroke-linecap="butt"/><path d="M588.2 114.8 H605.7" stroke="#4a4a4a" stroke-width="1.4" stroke-linecap="butt"/><path d="M588.2 107.3 H595.2 M592.3 104.3 L595.3 107.3 L592.3 110.4" fill="none" stroke="#2f8fd6" stroke-width="1.5"/><text x="634.6" y="67.5" font-family="Liberation Sans" font-size="12" fill="#444">ab</text><text x="634.6" y="76.8" font-family="Liberation Sans" font-size="12" fill="#444">c</text><path d="M651 68.6 Q651.6 73.5 647 73.5 H642.8 M646.4 69.6 L642.6 73.5 L646.6 77.3" fill="none" stroke="#2f85c8" stroke-width="1.5" stroke-linejoin="round"/><rect x="632.7" y="102.3" width="17.6" height="9.9" fill="#d7f1fb" stroke="#2f82c4" stroke-width="1.2"/><path d="M632.7 102.3 V98.7 H650.3 V102.3 M632.7 112.2 V116.2 H650.3 V112.2 M641.5 98.7 V102.3 M641.5 112.2 V116.2" fill="none" stroke="#3a3a3a" stroke-width="1.3"/><path d="M635.4 107.1 H647.6 M637.8 104.6 L635.3 107.1 L637.8 109.6 M645.2 104.6 L647.7 107.1 L645.2 109.6" fill="none" stroke="#2f82c4" stroke-width="1.4"/><path d="M786.5 106.5 L789.5 110 L792.5 106.5" fill="none" stroke="#333" stroke-width="1.3" stroke-linecap="round" stroke-linejoin="round"/><path d="M840.5 113.4 H831 V102.5 H848.8 V106" fill="none" stroke="#2e2e2e" stroke-width="1.5"/><path d="M836.4 104.6 C832.6 104.6 832.6 111 836.4 111 M840.6 105.2 C838.6 105.4 838.6 110 840.4 110.3" fill="none" stroke="#555" stroke-width="1.3"/><path d="M840.8 108 C840.8 105.8 849.4 105.8 849.4 108 V115.2 C849.4 117.6 840.8 117.6 840.8 115.2 Z" fill="#fbd7a2" stroke="#e8892a" stroke-width="1.3"/><path d="M840.8 108 C840.8 110.2 849.4 110.2 849.4 108 M840.8 111.6 C840.8 113.8 849.4 113.8 849.4 111.6" fill="none" stroke="#e8892a" stroke-width="1.2"/><path d="M860.5 107 L863.5 110.4 L866.5 107" fill="none" stroke="#333" stroke-width="1.3" stroke-linecap="round" stroke-linejoin="round"/><circle cx="885.7" cy="103.1" r="3.3" fill="none" stroke="#3a3a3a" stroke-width="1.4"/><circle cx="896.3" cy="112.8" r="3.3" fill="none" stroke="#3a3a3a" stroke-width="1.4"/><path d="M896.6 99.6 L885.4 116.5" stroke="#3a3a3a" stroke-width="1.4"/><circle cx="923.6" cy="105.3" r="4.2" fill="#333"/><path d="M926.8 105.6 C927.8 110.4 925 114 920.2 115.4" fill="none" stroke="#333" stroke-width="2.2" stroke-linecap="round"/><path d="M957 103.5 H949 M952 100.3 L948.8 103.5 L952 106.7" fill="none" stroke="#2f8fd6" stroke-width="1.5"/><rect x="951.6" y="115.4" width="1.4" height="1.4" fill="#444"/><path d="M957.5 112.3 C954.6 112.3 954.6 117 957.5 117" fill="none" stroke="#444" stroke-width="1.4"/><path d="M117.6 187.4 L123.2 192.5 L128.8 187.4" fill="none" stroke="#333" stroke-width="1.3" stroke-linecap="round" stroke-linejoin="round"/><path d="M171.6 181.6 L184.6 194.6 M184.6 181.6 L171.6 194.6" stroke="#a6a6a6" stroke-width="1.2"/><path d="M199 187.4 L205.3 193.7 L217.5 181.5" fill="none" stroke="#a6a6a6" stroke-width="1.2"/><path d="M242.8 179.8 C241.8 178.2 238.9 177.9 238 181.3 L234.8 192.7 C233.9 196.4 231.2 197.6 229.6 195.9" fill="none" stroke="#2a2a2a" stroke-width="1.9" stroke-linecap="round"/><path d="M233.6 183.8 H240" stroke="#2a2a2a" stroke-width="1.3"/><path d="M254.5 186.4 L260.0 191.5 L265.5 186.4" fill="none" stroke="#8a8a8a" stroke-width="1.1" stroke-linecap="round" stroke-linejoin="round"/><path d="M36 216 V236 H16 Z" fill="#b6b6b6"/><path d="M240 310 H247 L243.5 314 Z" fill="#5f5f5f"/><path d="M392 310 H399 L395.5 314 Z" fill="#5f5f5f"/><path d="M519 310 H526 L522.5 314 Z" fill="#5f5f5f"/><path d="M688 310 H695 L691.5 314 Z" fill="#5f5f5f"/><path d="M822 310 H829 L825.5 314 Z" fill="#5f5f5f"/></svg>
</body></html>
